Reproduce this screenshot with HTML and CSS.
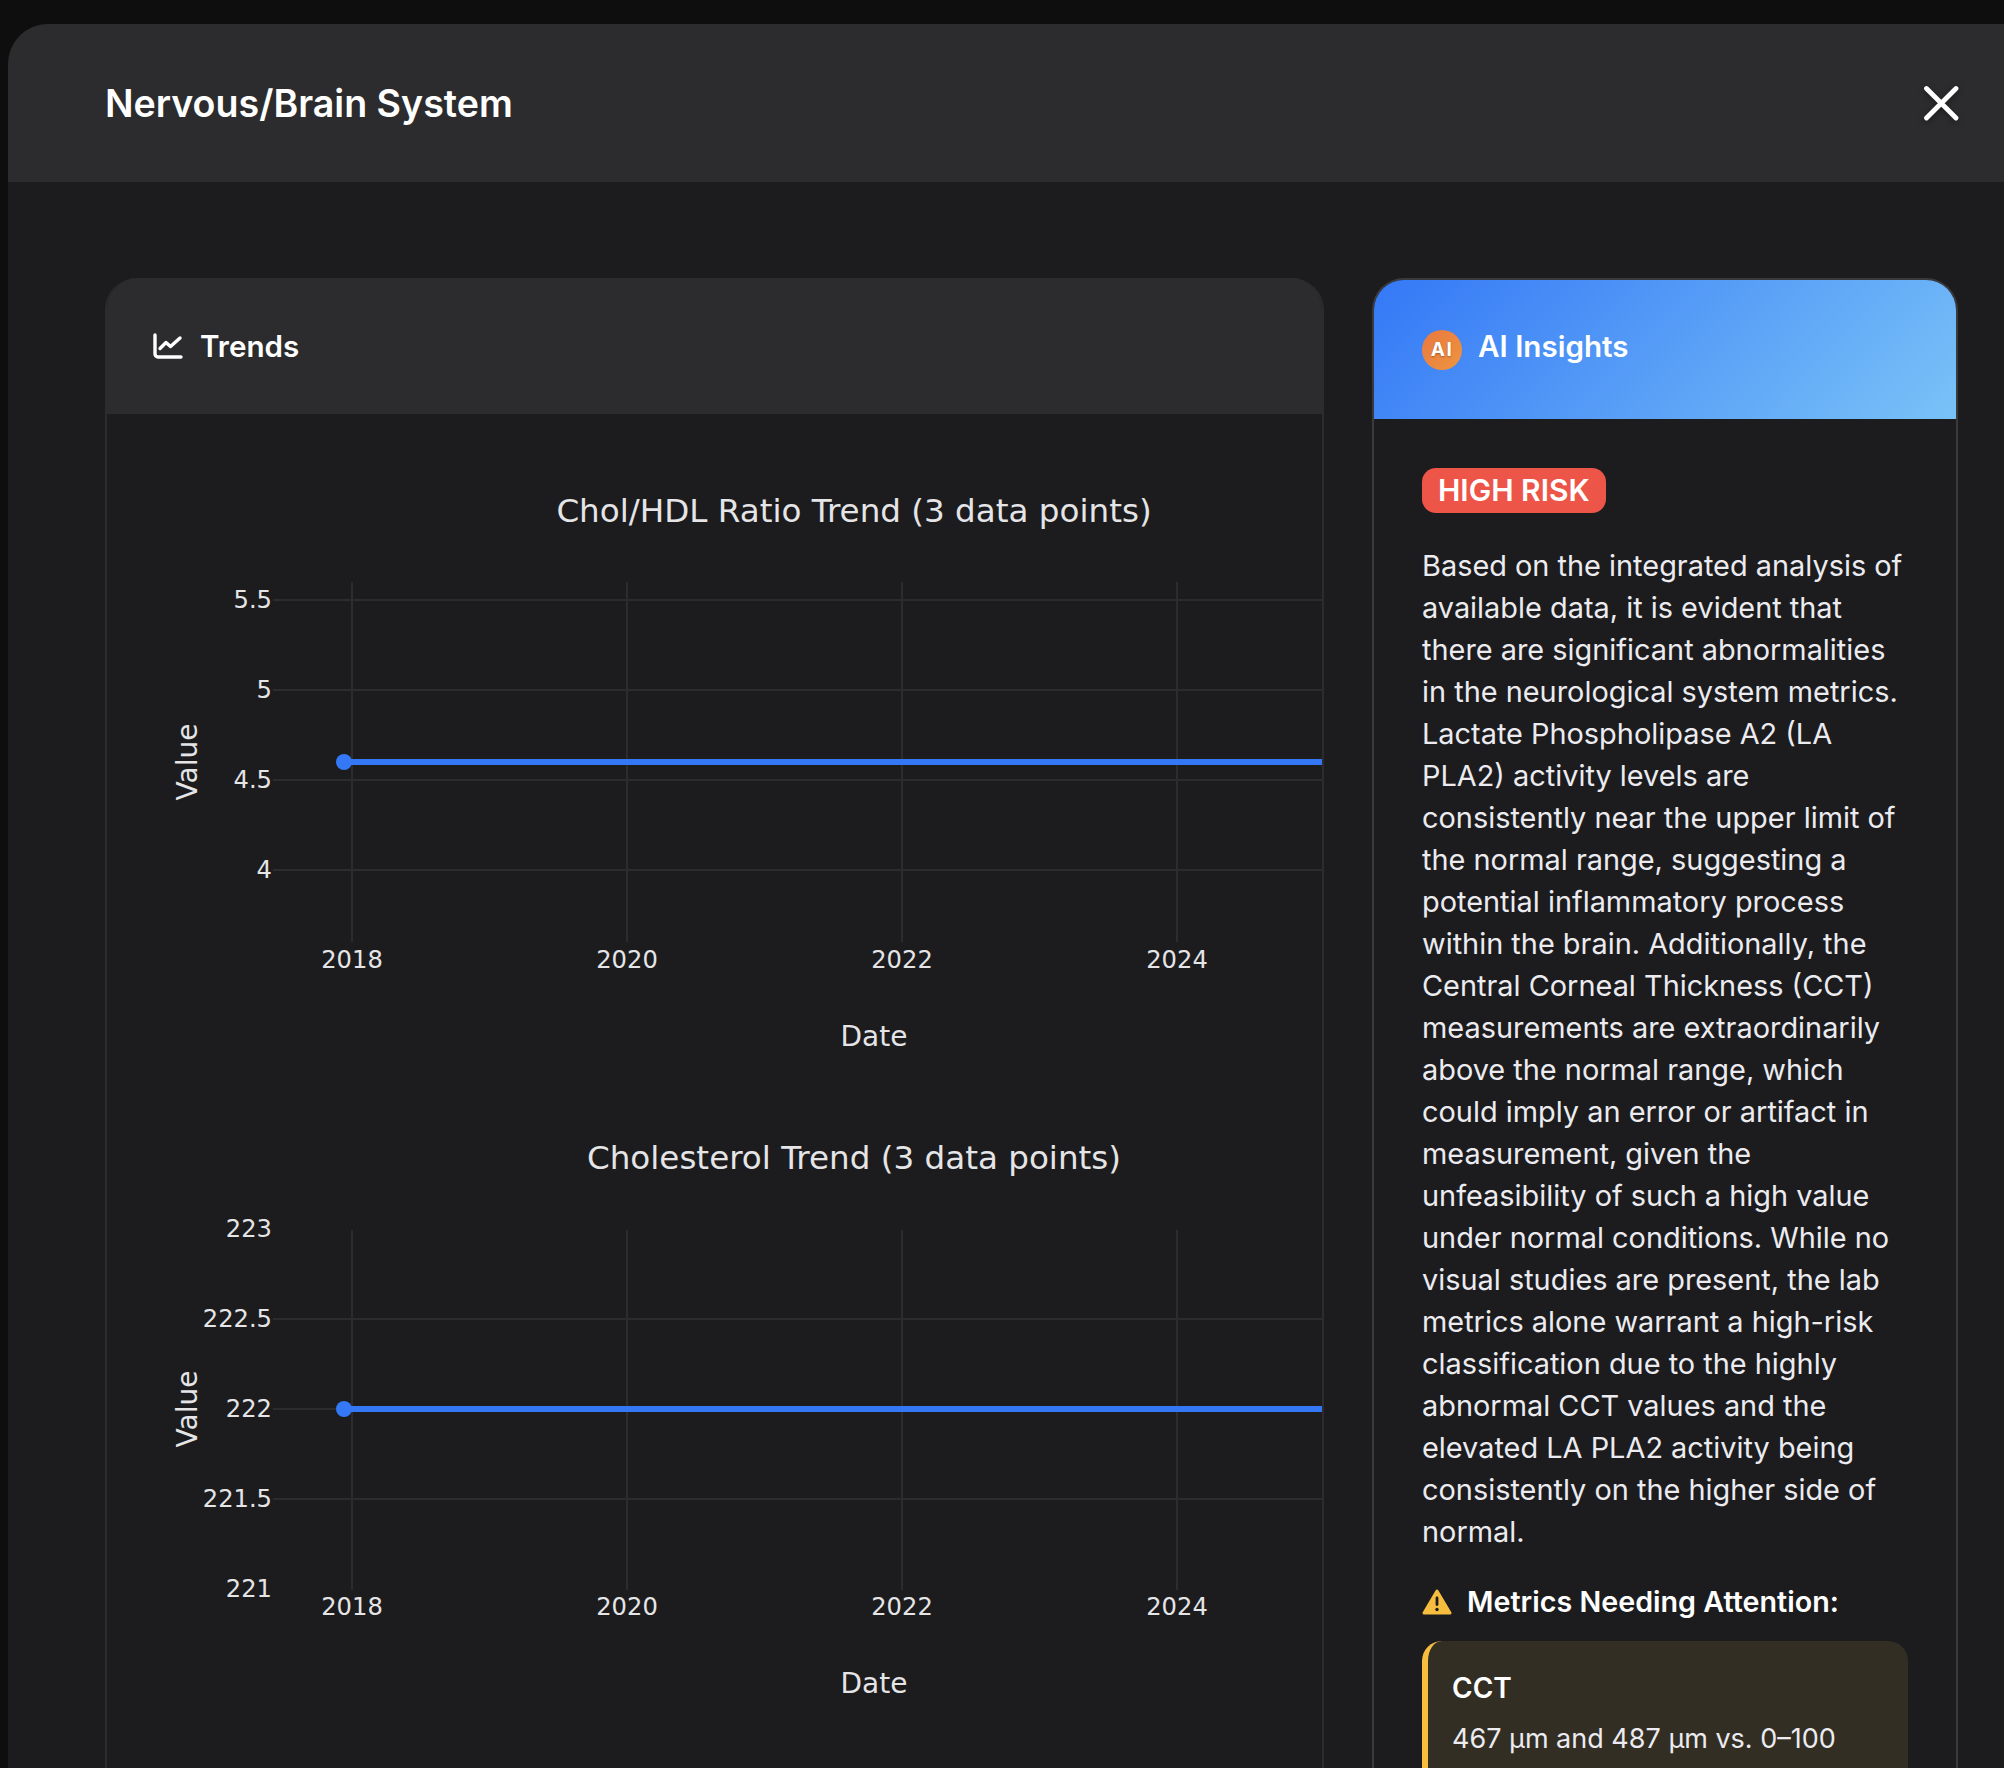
FILE: index.html
```html
<!DOCTYPE html>
<html lang="en">
<head>
    <meta charset="UTF-8">
    <meta name="viewport" content="width=device-width, initial-scale=1.0">
    <title>Nervous/Brain System</title>
    <link rel="stylesheet" href="styles.css">
</head>
<body>

    <div class="modal">
        <div class="modal-header">
            <h1 class="modal-title">Nervous/Brain System</h1>
            <button class="close-btn" aria-label="Close">
                <svg width="36" height="36" viewBox="0 0 36 36">
                    <path d="M3.5 3.5 L33 33 M33 3.5 L3.5 33" fill="none" stroke="#fff" stroke-width="4.8" stroke-linecap="round"/>
                </svg>
            </button>
        </div>

        <div class="modal-body">
            <section class="card trends">
                <div class="trends-header">
                    <svg class="trends-icon" width="30" height="26" viewBox="0 0 30 26">
                        <path d="M2 2 V21 a3 3 0 0 0 3 3 H28" fill="none" stroke="#fff" stroke-width="3.4" stroke-linecap="round"/>
                        <path d="M7 15.5 L13 9.5 L17.5 13.5 L27 5" fill="none" stroke="#fff" stroke-width="3.4" stroke-linecap="round" stroke-linejoin="round"/>
                    </svg>
                    <h2>Trends</h2>
                </div>

                <svg class="chart" width="1496" height="648" viewBox="0 0 1496 648">
                    <text class="chart-title" x="748" y="92" text-anchor="middle">Chol/HDL Ratio Trend (3 data points)</text>
                    <g class="grid">
                        <path d="M246 152 V512 M521 152 V512 M796 152 V512 M1071 152 V512"/>
                        <path d="M167 170 H1496 M167 260 H1496 M167 350 H1496 M167 440 H1496"/>
                    </g>
                    <path class="trace" d="M238 332 H1496"/>
                    <circle class="marker" cx="238" cy="332" r="8"/>
                    <g class="ytick" text-anchor="end">
                        <text x="166" y="178">5.5</text>
                        <text x="166" y="268">5</text>
                        <text x="166" y="358">4.5</text>
                        <text x="166" y="448">4</text>
                    </g>
                    <g class="xtick" text-anchor="middle">
                        <text x="246" y="538">2018</text>
                        <text x="521" y="538">2020</text>
                        <text x="796" y="538">2022</text>
                        <text x="1071" y="538">2024</text>
                    </g>
                    <text class="axis-label" x="768" y="616" text-anchor="middle">Date</text>
                    <text class="axis-label" transform="translate(91 332) rotate(-90)" text-anchor="middle">Value</text>
                </svg>

                <svg class="chart" width="1496" height="648" viewBox="0 0 1496 648">
                    <text class="chart-title" x="748" y="91" text-anchor="middle">Cholesterol Trend (3 data points)</text>
                    <g class="grid">
                        <path d="M246 152 V512 M521 152 V512 M796 152 V512 M1071 152 V512"/>
                        <path d="M167 241 H1496 M167 331 H1496 M167 421 H1496"/>
                    </g>
                    <path class="trace" d="M238 331 H1496"/>
                    <circle class="marker" cx="238" cy="331" r="8"/>
                    <g class="ytick" text-anchor="end">
                        <text x="166" y="159">223</text>
                        <text x="166" y="249">222.5</text>
                        <text x="166" y="339">222</text>
                        <text x="166" y="429">221.5</text>
                        <text x="166" y="519">221</text>
                    </g>
                    <g class="xtick" text-anchor="middle">
                        <text x="246" y="537">2018</text>
                        <text x="521" y="537">2020</text>
                        <text x="796" y="537">2022</text>
                        <text x="1071" y="537">2024</text>
                    </g>
                    <text class="axis-label" x="768" y="615" text-anchor="middle">Date</text>
                    <text class="axis-label" transform="translate(91 331) rotate(-90)" text-anchor="middle">Value</text>
                </svg>
            </section>

            <section class="card insights">
                <div class="insights-header">
                    <span class="ai-badge">AI</span>
                    <h2>AI Insights</h2>
                </div>
                <div class="insights-body">
                    <span class="risk">HIGH RISK</span>
                    <p class="summary">Based on the integrated analysis of available data, it is evident that there are significant abnormalities in the neurological system metrics. Lactate Phospholipase A2 (LA PLA2) activity levels are consistently near the upper limit of the normal range, suggesting a potential inflammatory process within the brain. Additionally, the Central Corneal Thickness (CCT) measurements are extraordinarily above the normal range, which could imply an error or artifact in measurement, given the unfeasibility of such a high value under normal conditions. While no visual studies are present, the lab metrics alone warrant a high-risk classification due to the highly abnormal CCT values and the elevated LA PLA2 activity being consistently on the higher side of normal.</p>
                    <h3 class="attention">
                        <svg width="30" height="26" viewBox="0 0 30 26">
                            <path d="M15 2 L28 24 H2 Z" fill="#f6bd3f" stroke="#f6bd3f" stroke-width="3" stroke-linejoin="round"/>
                            <path d="M15 9 V15.5" stroke="#1c1c1e" stroke-width="2.8" stroke-linecap="round"/>
                            <circle cx="15" cy="20.5" r="1.7" fill="#1c1c1e"/>
                        </svg>
                        Metrics Needing Attention:
                    </h3>
                    <div class="metric">
                        <div class="metric-name">CCT</div>
                        <div class="metric-value">467 µm and 487 µm vs. 0–100</div>
                    </div>
                </div>
            </section>
        </div>
    </div>

</body>
</html>
```

FILE: styles.css
```css
html, body {
    height: 1768px;
    overflow: hidden;
}

body {
    font-family: Inter, "Liberation Sans", sans-serif;
    background-color: #0e0e0f;
    color: #fff;
    margin: 0;
    padding: 24px 0 0 8px;
    box-sizing: border-box;
}

.modal {
    width: 2045px;
    height: 1744px;
    background-color: #1c1c1e;
    border-radius: 40px 40px 0 0;
    overflow: hidden;
}

.modal-header {
    height: 158px;
    background-color: #2c2c2e;
    display: flex;
    align-items: center;
    justify-content: space-between;
    padding: 0 94px 0 97px;
    box-sizing: border-box;
}

.modal-title {
    margin: 0;
    font-size: 37.6px;
    font-weight: 600;
}

.close-btn {
    background: none;
    border: none;
    padding: 0;
    display: flex;
    filter: drop-shadow(0 2px 3px rgba(0, 0, 0, 0.4));
}

.modal-body {
    display: grid;
    grid-template-columns: 1219px 586px;
    gap: 48px;
    padding: 96px 97px 0;
    align-items: start;
}

.card {
    border-radius: 32px;
    overflow: hidden;
    box-sizing: border-box;
}

.trends {
    height: 1600px;
    border: 2px solid #2c2c2e;
    border-width: 0 2px;
}

.trends-header {
    height: 136px;
    background-color: #2c2c2e;
    display: flex;
    align-items: center;
    gap: 17px;
    padding-left: 48px;
    margin: 0 -2px;
}

.trends-header h2,
.insights-header h2 {
    margin: 0;
    font-size: 29.6px;
    font-weight: 600;
}

.insights-header h2 {
    position: relative;
    top: -4px;
}

.chart {
    display: block;
    margin: 16px 0 0 -1px;
}

.chart + .chart {
    margin-top: 0;
}

.chart text {
    font-family: "DejaVu Sans", sans-serif;
    fill: #e5e5e7;
}

.chart-title {
    font-size: 32.6px;
}

.axis-label {
    font-size: 28px;
}

.ytick,
.xtick {
    font-size: 24.2px;
}

.grid path {
    fill: none;
    stroke: #2c2c2e;
    stroke-width: 2;
}

.trace {
    fill: none;
    stroke: #3478f6;
    stroke-width: 6;
}

.marker {
    fill: #3478f6;
}

.insights {
    height: 1600px;
    border: 2px solid #3a3a3c;
    border-bottom: none;
}

.insights-header {
    height: 139px;
    background: linear-gradient(135deg, #3478f6, #79c2f7);
    display: flex;
    align-items: center;
    gap: 16px;
    padding-left: 48px;
}

.ai-badge {
    width: 40px;
    height: 40px;
    border-radius: 50%;
    background: linear-gradient(135deg, #e97840, #ee9540);
    font-size: 19px;
    font-weight: 700;
    letter-spacing: 1.5px;
    display: flex;
    align-items: center;
    justify-content: center;
    text-shadow: 0 1px 2px rgba(0, 0, 0, 0.3);
}

.insights-body {
    padding: 49px 48px 0;
}

.risk {
    display: inline-block;
    background-color: #ec5547;
    border-radius: 14px;
    padding: 0 16px;
    font-size: 30px;
    font-weight: 600;
    line-height: 45px;
}

.summary {
    margin: 32px 0 0;
    font-size: 28.9px;
    line-height: 42px;
    color: #ebebf0;
}

.attention {
    margin: 28px 0 0;
    display: flex;
    align-items: center;
    gap: 15px;
    font-size: 28.7px;
    font-weight: 600;
    line-height: 42px;
}

.metric {
    margin-top: 18px;
    background-color: #332e24;
    border-left: 6px solid #f6bd3f;
    border-radius: 20px;
    padding: 25px 24px 24px;
    height: 200px;
    box-sizing: border-box;
}

.metric-name {
    font-size: 28px;
    font-weight: 600;
    line-height: 44px;
}

.metric-value {
    margin-top: 7px;
    font-size: 27px;
    line-height: 44px;
    color: #ebebf0;
}
```
